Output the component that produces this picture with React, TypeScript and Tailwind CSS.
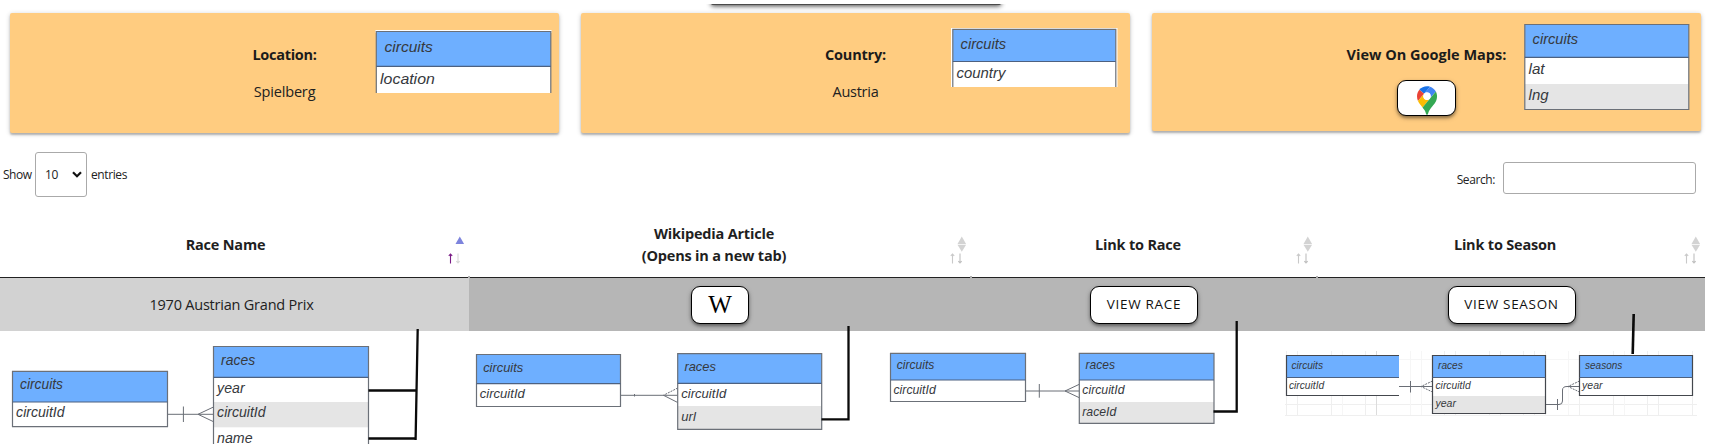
import React from "react";

type Field = { text: string; y: number; w: number };

type EntityProps = {
  x: number;
  y: number;
  w: number;
  h: number;
  split: number;
  size: number;
  title: Field & { dx: number };
  fields: Field[];
  fieldDx: number;
  shade?: [number, number];
  open?: "right" | "bottom";
  stroke?: string;
};

/* A database table box: blue title band, italic field names. */
function Entity({ x, y, w, h, split, size, title, fields, fieldDx, shade, open, stroke = "#6b7078" }: EntityProps) {
  const outline =
    open === "right"
      ? `M${x + w} ${y}H${x}V${y + h}H${x + w}`
      : open === "bottom"
        ? `M${x} ${y + h}V${y}H${x + w}V${y + h}`
        : `M${x} ${y}H${x + w}V${y + h}H${x}Z`;
  return (
    <g>
      <rect x={x} y={y} width={w} height={h} fill="#fff" />
      <rect x={x} y={y} width={w} height={split - y} fill="#6eafff" />
      {shade && <rect x={x} y={shade[0]} width={w} height={shade[1] - shade[0]} fill="#e5e5e5" />}
      <path d={outline} fill="none" stroke={stroke} strokeWidth="1.2" />
      <path d={`M${x} ${split}H${x + w}`} stroke="#4d6180" strokeWidth="1.2" />
      <g fontSize={size} fontStyle="italic" fill="#36393d">
        <text x={x + title.dx} y={title.y} textLength={title.w} lengthAdjust="spacingAndGlyphs">{title.text}</text>
        {fields.map((f) => (
          <text key={f.text} x={x + fieldDx} y={f.y} textLength={f.w} lengthAdjust="spacingAndGlyphs">{f.text}</text>
        ))}
      </g>
    </g>
  );
}

const erFont = "[font-family:'Liberation_Sans',Arial,sans-serif]";

function InfoCard({ title, className, children, diagram }: { title: React.ReactNode; className: string; children: React.ReactNode; diagram: React.ReactNode }) {
  return (
    <section className={`relative flex flex-col items-center rounded-[2px] bg-[#ffcc80] pt-[30px] shadow-[0_2px_2px_0_rgba(0,0,0,0.22),0_1px_5px_0_rgba(0,0,0,0.2)] ${className}`}>
      <h2 className="text-[14.5px] leading-6 font-bold tracking-[-0.2px] text-[#1b1b1b]">{title}</h2>
      {children}
      {diagram}
    </section>
  );
}

function MapsPin() {
  return (
    <svg viewBox="0 0 92.3 132.3" className="h-[29px] w-[20px]">
      <path fill="#1a73e8" d="M60.2 2.2C55.8.8 51 0 46.1 0 32 0 19.3 6.4 10.8 16.5l21.8 18.3L60.2 2.2z" />
      <path fill="#ea4335" d="M10.8 16.5C4.1 24.5 0 34.9 0 46.1c0 8.7 1.7 15.7 4.6 22l28-33.3-21.8-18.3z" />
      <path fill="#4285f4" d="M46.2 28.5c9.8 0 17.7 7.9 17.7 17.7 0 4.3-1.6 8.3-4.2 11.4 0 0 13.9-16.6 27.5-32.7-5.6-10.8-15.3-19-27-22.7L32.6 34.8c3.3-3.8 8.1-6.3 13.6-6.3" />
      <path fill="#fbbc04" d="M46.2 63.8c-9.8 0-17.7-7.9-17.7-17.7 0-4.3 1.5-8.3 4.1-11.3l-28 33.3c4.8 10.6 12.8 19.2 21 29.9l34.1-40.5c-3.3 3.9-8.1 6.3-13.5 6.3" />
      <path fill="#34a853" d="M59.1 109.2c15.4-24.1 33.3-35 33.3-63 0-7.7-1.9-14.9-5.2-21.3L25.6 98c2.6 3.4 5.3 7.3 7.9 11.3 9.4 14.5 6.8 23.1 12.8 23.1s3.4-8.7 12.8-23.2" />
      <circle cx="46.2" cy="46.2" r="16" fill="#fff" />
    </svg>
  );
}

const pill =
  "flex items-center justify-center rounded-[9px] border-[1.5px] border-black bg-white shadow-[0_2px_3px_rgba(0,0,0,0.3),0_2px_5px_rgba(0,0,0,0.25)]";

function SortMark({ active = false }: { active?: boolean }) {
  return (
    <svg viewBox="0 0 18 30" className="absolute top-[13px] right-[4px] h-[30px] w-[18px]">
      <path d="M8.5 9L12.8 1.6L17.1 9Z" fill={active ? "#7d84dd" : "#d3d3d3"} />
      {!active && <path d="M8.5 9.8H17.1L12.8 16.8Z" fill="#d3d3d3" />}
      <path d="M3.5 28.5V19M1.8 20.8L3.5 19L5.2 20.8" fill="none" stroke={active ? "#7a1c86" : "#c9c9c9"} strokeWidth="1.1" />
      <path d="M11 18.5V28M9.3 26.2L11 28L12.7 26.2" fill="none" stroke={active ? "#d8d8d8" : "#c0c0c0"} strokeWidth="1.1" />
    </svg>
  );
}

function HeadCell({ className, children, active, last }: { className: string; children: React.ReactNode; active?: boolean; last?: boolean }) {
  return (
    <div className={`relative flex items-center justify-center pb-[10px] text-center text-[14.5px] leading-[22px] font-bold tracking-[-0.2px] text-[#1f1f1f] ${className}`}>
      <span>{children}</span>
      <SortMark active={active} />
      {!last && <i className="absolute right-[-1px] -bottom-px h-[2px] w-[2px] bg-[#b0b0b0]" />}
    </div>
  );
}

function RelationDiagrams() {
  return (
    <svg viewBox="0 308 1712 136" className={`relative -mt-[23px] h-[136px] w-[1712px] shrink-0 ${erFont}`}>
      <g stroke="#efefef" strokeWidth="1" fill="none">
        <path d="M1285 404.5H1697M1285 415.5H1697" />
        <path d="M1286.5 351V415M1297.5 351V415M1331.5 351V415M1365.5 351V415M1444.5 351V415M1455.5 351V415M1489.5 351V415M1500.5 351V415M1523.5 351V415M1534.5 351V415M1545.5 351V415M1579.5 351V415M1613.5 351V415M1647.5 351V415M1658.5 351V415M1692.5 351V415" />
        <path d="M1342.5 351V415M1410.5 351V415M1421.5 351V415M1568.5 351V415M1624.5 351V415M1399 359.5H1432M1546 359.5H1579" stroke="#f6f6f6" />
        <path d="M1376.5 351V415" stroke="#dcdcdc" />
      </g>

      <g fill="none" stroke="#6a6e76" strokeWidth="1">
        <path d="M167.5 414.3H213.5M183.4 406.5V422M213.5 407L198 414.3L213.5 421.7" />
        <path d="M620.3 395.3H677.7M634.5 394V396.5M663.5 395.3L677.7 402.5" />
        <path d="M677.7 388L663.5 395.3" strokeDasharray="2 1" />
        <path d="M1025.5 391H1079.3M1039.3 384V397.7M1079.3 384.3L1065 391L1079.3 397.7" />
        <path d="M1399 386.5H1432.5M1410.5 381V392.5" />
        <path d="M1432.5 381L1421 386.5L1432.5 392" strokeDasharray="2 1" />
        <path d="M1545.5 404.5H1559Q1562.5 404.5 1562.5 401V390Q1562.5 386.5 1567 386.5H1579.5M1557.5 399V410" />
        <path d="M1579.5 381L1568 386.5L1579.5 392" strokeDasharray="2 1" />
      </g>

      <Entity x={12.5} y={371.3} w={155} h={55.4} split={402} size={14} title={{ text: "circuits", dx: 7.6, y: 389.3, w: 42.8 }} fieldDx={3.6}
        fields={[{ text: "circuitId", y: 417.3, w: 48.5 }]} />
      <Entity x={213.5} y={346.5} w={155} h={110} split={377.3} size={14} shade={[402, 427.3]} title={{ text: "races", dx: 7.6, y: 364.5, w: 34 }} fieldDx={3.6}
        fields={[{ text: "year", y: 392.5, w: 27.5 }, { text: "circuitId", y: 417.3, w: 48.5 }, { text: "name", y: 442.7, w: 35.5 }]} />

      <Entity x={476.5} y={354.5} w={144} h={52} split={383.6} size={13} title={{ text: "circuits", dx: 6.7, y: 371.7, w: 40 }} fieldDx={3.3}
        fields={[{ text: "circuitId", y: 398, w: 45 }]} />
      <Entity x={677.7} y={353.7} w={144} h={75.6} split={383.4} size={13} shade={[406, 429]} title={{ text: "races", dx: 6.7, y: 371.3, w: 31.5 }} fieldDx={3.6}
        fields={[{ text: "circuitId", y: 398, w: 45 }, { text: "url", y: 421, w: 14.5 }]} />

      <Entity x={890.5} y={353.3} w={135} h={48.2} split={380} size={12.2} title={{ text: "circuits", dx: 6.3, y: 369.3, w: 37.5 }} fieldDx={3}
        fields={[{ text: "circuitId", y: 393.5, w: 42.2 }]} />
      <Entity x={1079.3} y={353.3} w={134.7} h={70} split={380} size={12.2} shade={[402, 423]} title={{ text: "races", dx: 6.3, y: 369.3, w: 29.5 }} fieldDx={3}
        fields={[{ text: "circuitId", y: 394, w: 42.2 }, { text: "raceId", y: 415.7, w: 34 }]} />

      <Entity x={1286.5} y={355.5} w={112.5} h={40} split={377.5} size={10.2} open="right" stroke="#44474d" title={{ text: "circuits", dx: 5, y: 368.7, w: 31.5 }} fieldDx={2.4}
        fields={[{ text: "circuitId", y: 389, w: 35.3 }]} />
      <Entity x={1432.5} y={355.5} w={113} h={58} split={377.5} size={10.2} shade={[396, 413]} stroke="#44474d" title={{ text: "races", dx: 5.5, y: 368.7, w: 24.8 }} fieldDx={3}
        fields={[{ text: "circuitId", y: 389, w: 35.3 }, { text: "year", y: 406.7, w: 20.4 }]} />
      <Entity x={1579.5} y={355.5} w={113} h={40} split={377.5} size={10.2} stroke="#44474d" title={{ text: "seasons", dx: 5.5, y: 368.7, w: 37.3 }} fieldDx={2.6}
        fields={[{ text: "year", y: 389, w: 20.4 }]} />

      <g fill="none" stroke="#0a0a0a" strokeWidth="2.3">
        <path d="M417.7 329L415.6 440M368.5 390.5H417M368.5 438.5H416" />
        <path d="M848.5 326V419.4H821.5" />
        <path d="M1236.7 321V411.5H1213.5" />
        <path d="M1633.7 314L1632.7 354" strokeWidth="2.6" />
      </g>
    </svg>
  );
}

export default function App() {
  return (
    <div className="relative flex h-[444px] w-[1712px] flex-col overflow-hidden bg-white [font-family:'Open_Sans','Noto_Sans',sans-serif]">
      <div className="flex h-[13px] shrink-0 items-start justify-center pt-[4px] pr-[1px]">
        <div className="flex h-[8px] w-[300px] flex-col items-center overflow-hidden">
          <div className="-mt-[5px] h-[6px] w-[290px] shrink-0 rounded-b-[2px] bg-[#4a4a4a] shadow-[0_1px_5px_0_rgba(0,0,0,0.75)]" />
        </div>
      </div>

      <div className="flex h-[121px] shrink-0 items-start gap-[22px] pl-[10px]">
        <InfoCard
          title={<span className="tracking-[-0.3px]">Location:</span>}
          className="h-[120px] w-[549px]"
          diagram={
            <svg viewBox="375 30 177 63" className={`absolute top-[17px] left-[365px] h-[63px] w-[177px] ${erFont}`}>
              <rect x="375.5" y="30" width="176" height="3" fill="#fff" />
              <Entity x={376.3} y={31.5} w={174.5} h={62} split={66.4} size={15.5} open="bottom" title={{ text: "circuits", dx: 8.3, y: 52.3, w: 48.3 }} fieldDx={3.8}
                fields={[{ text: "location", y: 84, w: 54.7 }]} />
            </svg>
          }
        >
          <p className="mt-[13px] text-[14.5px] leading-6 tracking-[-0.15px] text-[#212121]">Spielberg</p>
        </InfoCard>
        <InfoCard
          title={<span>Country:</span>}
          className="h-[120px] w-[549px]"
          diagram={
            <svg viewBox="951 28 167 59" className={`absolute top-[15px] left-[370px] h-[59px] w-[167px] ${erFont}`}>
              <rect x="951" y="28" width="166.5" height="59" fill="#fff" />
              <Entity x={952.8} y={29.3} w={163} h={59} split={61.5} size={14.5} open="bottom" title={{ text: "circuits", dx: 7.8, y: 49, w: 45.4 }} fieldDx={3.8}
                fields={[{ text: "country", y: 78.2, w: 48.8 }]} />
            </svg>
          }
        >
          <p className="mt-[13px] text-[14.5px] leading-6 tracking-[-0.25px] text-[#212121]">Austria</p>
        </InfoCard>
        <InfoCard
          title={<span className="tracking-normal">View On Google Maps:</span>}
          className="h-[118px] w-[549px]"
          diagram={
            <svg viewBox="1523 23 166 88" className={`absolute top-[10px] left-[372px] h-[88px] w-[166px] ${erFont}`}>
              <Entity x={1523.8} y={24.5} w={164} h={85} split={57.3} size={14.5} shade={[84, 109]} title={{ text: "circuits", dx: 7.8, y: 44.2, w: 45.4 }} fieldDx={3.8}
                fields={[{ text: "lat", y: 74, w: 16 }, { text: "lng", y: 100.2, w: 20 }]} />
            </svg>
          }
        >
          <button className={`mt-[13px] h-[36px] w-[59px] pt-[4px] ${pill}`}>
            <MapsPin />
          </button>
        </InfoCard>
      </div>

      <div className="flex h-[88px] shrink-0 items-start justify-between pt-[18px] pr-[16px] pl-[3px] text-[12px] tracking-[-0.4px] text-[#222]">
        <label className="flex items-center">
          <span className="w-[32px] tracking-[-0.5px]">Show</span>
          <span className="mr-[4px] flex h-[45px] w-[52px] items-center justify-between rounded-[3px] border border-[#aaa] pr-[4px] pl-[9px]">
            10
            <svg viewBox="0 0 10 7" className="h-[7px] w-[10px]">
              <path d="M1 1.2L5 5.2L9 1.2" fill="none" stroke="#111" strokeWidth="2.2" />
            </svg>
          </span>
          <span>entries</span>
        </label>
        <label className="flex items-start gap-[8px] pt-[10px]">
          <span className="pt-[9px]">Search:</span>
          <input className="h-[32px] w-[193px] rounded-[3px] border border-[#aaa] bg-white" />
        </label>
      </div>

      <div className="flex h-[56px] w-[1705px] shrink-0 border-b border-[#222]">
        <HeadCell className="w-[469px] pr-[18px]" active>Race Name</HeadCell>
        <HeadCell className="w-[502px] pr-[12px]">
          Wikipedia Article
          <br />
          (Opens in a new tab)
        </HeadCell>
        <HeadCell className="w-[346px] pr-[12px]">Link to Race</HeadCell>
        <HeadCell className="w-[388px] pr-[12px]" last>Link to Season</HeadCell>
      </div>

      <div className="flex h-[53px] w-[1705px] shrink-0 bg-[#b6b6b6] text-[14.5px] text-[#212121]">
        <div className="flex w-[469px] items-center justify-center bg-[#d2d2d2] pr-[6px] tracking-[-0.22px]">1970 Austrian Grand Prix</div>
        <div className="flex w-[502px] items-center justify-center">
          <button className={`h-[38px] w-[58px] text-[25px] leading-none text-black [font-family:'Liberation_Serif',serif] ${pill}`}>W</button>
        </div>
        <div className="flex w-[346px] items-center justify-center">
          <button className={`h-[38px] w-[108px] text-[13.5px] tracking-[0.7px] text-[#111] ${pill}`}>VIEW RACE</button>
        </div>
        <div className="flex w-[388px] items-center justify-center pl-[1px]">
          <button className={`h-[38px] w-[128px] text-[13.5px] tracking-[0.7px] text-[#111] ${pill}`}>VIEW SEASON</button>
        </div>
      </div>

      <RelationDiagrams />
    </div>
  );
}
